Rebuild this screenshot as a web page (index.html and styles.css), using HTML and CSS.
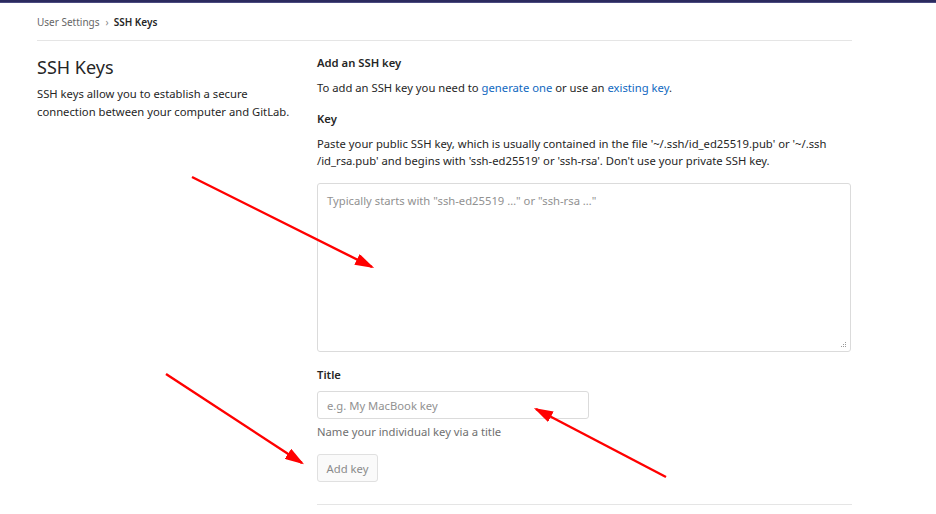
FILE: index.html
```html
<!DOCTYPE html>
<html>
<head>
<meta charset="utf-8">
<link rel="stylesheet" href="styles.css">
</head>
<body>
<div class="topbar"></div>
<div class="page">
  <div class="breadcrumb">
    <span class="crumb">User Settings</span>
    <span class="sep">›</span>
    <span class="crumb current">SSH Keys</span>
  </div>
  <div class="row">
    <div class="side">
      <h4 class="side-title">SSH Keys</h4>
      <p class="side-desc">SSH keys allow you to establish a secure connection between your computer and GitLab.</p>
    </div>
    <div class="main">
      <h5 class="h-add">Add an SSH key</h5>
      <p class="intro">To add an SSH key you need to <a href="#">generate one</a> or use an <a href="#">existing key</a>.</p>
      <label class="label label-key">Key</label>
      <p class="key-help">Paste your public SSH key, which is usually contained in the file '~/.ssh/id_ed25519.pub' or '~/.ssh /id_rsa.pub' and begins with 'ssh-ed25519' or 'ssh-rsa'. Don't use your private SSH key.</p>
      <div class="area-wrap">
        <textarea class="key-area" placeholder="Typically starts with &quot;ssh-ed25519 …&quot; or &quot;ssh-rsa …&quot;"></textarea>
        <svg class="grip" width="6" height="6" viewBox="0 0 6 6">
          <rect x="4" y="0" width="1" height="1" fill="#999"/>
          <rect x="2" y="2" width="1" height="1" fill="#999"/>
          <rect x="4" y="2" width="1" height="1" fill="#999"/>
          <rect x="0" y="4" width="1" height="1" fill="#999"/>
          <rect x="2" y="4" width="1" height="1" fill="#999"/>
          <rect x="4" y="4" width="1" height="1" fill="#999"/>
        </svg>
      </div>
      <label class="label label-title">Title</label>
      <input class="title-input" type="text" placeholder="e.g. My MacBook key">
      <p class="title-help">Name your individual key via a title</p>
      <button class="btn-add" disabled>Add key</button>
      <hr class="bottom-hr">
    </div>
  </div>
</div>
<svg class="annot" width="936" height="514" viewBox="0 0 936 514">
  <defs>
    <marker id="ah" markerWidth="8" markerHeight="5" refX="7" refY="2.5" orient="auto" markerUnits="strokeWidth">
      <path d="M0,0 L8,2.5 L0,5 Z" fill="#ff0000"/>
    </marker>
  </defs>
  <line x1="192" y1="177" x2="372" y2="267" stroke="#ff0000" stroke-width="2.4" marker-end="url(#ah)"/>
  <line x1="166" y1="374" x2="302" y2="463" stroke="#ff0000" stroke-width="2.4" marker-end="url(#ah)"/>
  <line x1="666" y1="477" x2="536" y2="409" stroke="#ff0000" stroke-width="2.4" marker-end="url(#ah)"/>
</svg>
</body>
</html>
```
FILE: styles.css
```css
* { box-sizing: border-box; }
html, body { margin: 0; padding: 0; background: #fff; }
body {
  font-family: "Noto Sans", "Open Sans", sans-serif;
  font-size: 11.25px;
  color: #262626;
  width: 936px;
  height: 514px;
  overflow: hidden;
  position: relative;
}
.topbar {
  height: 3px;
  background: #2b2a5e;
  border-bottom: 1px solid #4a4a80;
}
.page {
  width: 815px;
  margin-left: 37px;
}
.breadcrumb {
  height: 38px;
  display: flex;
  align-items: center;
  border-bottom: 1px solid #e5e5e5;
  font-size: 10px;
  padding-top: 1px;
}
.crumb { color: #666; }
.crumb.current { color: #262626; font-weight: 600; }
.sep { color: #888; margin: 0 5px 0 6px; font-size: 10px; }
.row { display: flex; }
.side { width: 280px; flex: none; padding-top: 15px; padding-right: 20px; }
.side-title {
  margin: 0;
  font-size: 18px;
  line-height: 22px;
  font-weight: 400;
  color: #262626;
}
.side-desc {
  margin: 7px 0 0;
  line-height: 18px;
  color: #262626;
}
.main { flex: 1; padding-top: 13px; line-height: 17px; }
.h-add { margin: 0; font-size: 11.25px; font-weight: 600; }
.intro { margin: 8px 0 0; }
.intro a { color: #1068bf; text-decoration: none; }
.label { display: block; font-weight: 600; }
.label-key { margin-top: 14px; }
.key-help { margin: 8px 0 0; }
.area-wrap { position: relative; margin-top: 14px; width: 534px; }
.key-area {
  display: block;
  width: 534px;
  height: 169px;
  border: 1px solid #dbdbdb;
  border-radius: 3px;
  padding: 8px 9px;
  font-family: inherit;
  font-size: 11.25px;
  line-height: 17px;
  resize: none;
  color: #262626;
}
.grip { position: absolute; right: 4px; bottom: 4px; }
.key-area::placeholder, .title-input::placeholder { color: #919191; }
.label-title { margin-top: 14px; }
.title-input {
  display: block;
  width: 272px;
  height: 28px;
  margin-top: 8px;
  border: 1px solid #dbdbdb;
  border-radius: 3px;
  padding: 0 9px;
  font-family: inherit;
  font-size: 11.25px;
}
.title-help { margin: 4px 0 0; color: #707070; }
.btn-add {
  display: block;
  margin-top: 14px;
  width: 61px;
  height: 28px;
  background: #fafafa;
  border: 1px solid #e0e0e0;
  border-radius: 3px;
  color: #8a8a8a;
  font-family: inherit;
  font-size: 11.25px;
  padding: 0;
}
.bottom-hr {
  margin: 22px 0 0;
  border: 0;
  border-top: 1px solid #e5e5e5;
}
.annot { position: absolute; left: 0; top: 0; pointer-events: none; }
```
